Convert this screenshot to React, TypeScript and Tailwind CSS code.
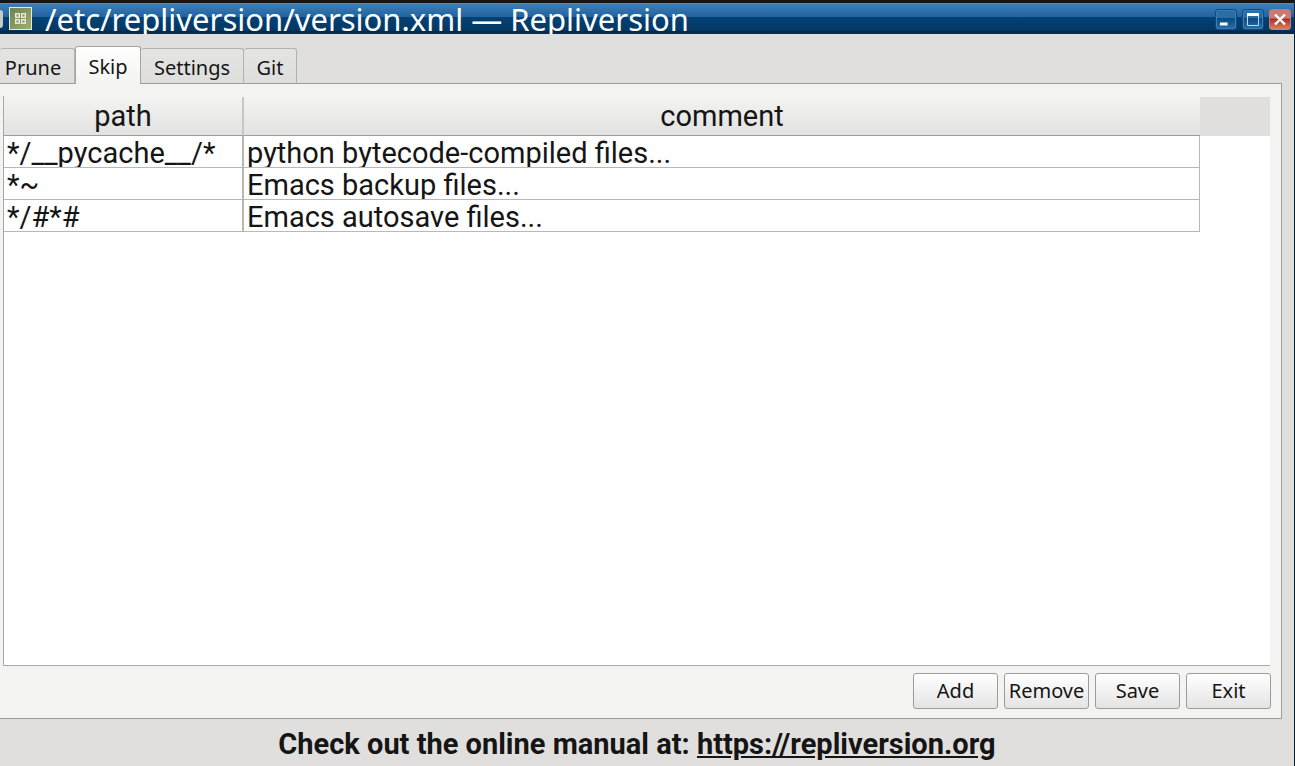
import React, { useState } from "react";

const tabs = [
  { name: "Prune", width: "w-[75px] pr-2" },
  { name: "Skip", width: "w-[66px]" },
  { name: "Settings", width: "w-[103px]" },
  { name: "Git", width: "w-[53px]" },
];

const rows = [
  { path: "*/__pycache__/*", comment: "python bytecode-compiled files..." },
  { path: "*~", comment: "Emacs backup files..." },
  { path: "*/#*#", comment: "Emacs autosave files..." },
];

const actions = ["Add", "Remove", "Save", "Exit"];

function AppIcon() {
  return (
    <svg width="23" height="23" viewBox="0 0 23 23" className="shrink-0">
      <defs>
        <linearGradient id="leaf" x1="0" y1="0" x2="1" y2="1">
          <stop offset="0" stopColor="#6f8150" />
          <stop offset="1" stopColor="#a3ad72" />
        </linearGradient>
      </defs>
      <rect x="0.5" y="0.5" width="22" height="22" fill="url(#leaf)" stroke="#e3ecd0" />
      <g fill="#8b9865" stroke="#e6eadb" strokeWidth="1.4">
        <rect x="6.7" y="6.7" width="3.6" height="3.6" />
        <rect x="12.7" y="6.7" width="3.6" height="3.6" />
        <rect x="6.7" y="12.7" width="3.6" height="3.6" />
        <rect x="12.7" y="12.7" width="3.6" height="3.6" />
      </g>
    </svg>
  );
}

function TitleBar() {
  const control =
    "h-[21px] w-[22px] rounded-[3px] border border-[#0d4a80] bg-linear-to-b from-[#2a6ea8] from-40% via-[#0b4a80] via-45% to-[#2a6fa6] shadow-[inset_0_0_0_1px_#3a7db3]";
  return (
    <header className="flex h-[34px] shrink-0 items-center overflow-hidden border-t-3 border-[#151515] bg-[linear-gradient(#3c80b8,#2263a0_45%,#034275_46%,#033863_88%,#02294a_92%,#033055)] shadow-[inset_0_1px_0_#4a8fc4]">
      <span className="mr-[6px] h-[18px] w-[3px] shrink-0 rounded-r-sm bg-[#c9cac8]" />
      <AppIcon />
      <h1 className="ml-[13px] flex-1 font-['Noto_Sans',sans-serif] text-[31px] leading-[34px] whitespace-nowrap text-white">
        /etc/repliversion/version.xml — Repliversion
      </h1>
      <div className="mt-px mr-[3px] flex gap-[5px]">
        <button type="button" aria-label="Minimize" className={control}>
          <svg viewBox="0 0 20 19" className="block">
            <rect x="4" y="12" width="8" height="4" fill="#7fabd0" />
            <rect x="4" y="13" width="7" height="2" fill="#fff" />
          </svg>
        </button>
        <button type="button" aria-label="Maximize" className={control}>
          <svg viewBox="0 0 20 19" className="block">
            <path d="M4.5 5V15.5H15.5V5" fill="none" stroke="#c5d8e8" />
            <rect x="4" y="3" width="12" height="3" fill="#fff" />
          </svg>
        </button>
        <button
          type="button"
          aria-label="Close"
          className="h-[21px] w-[22px] rounded-[3px] border border-[#d0786c] bg-linear-to-b from-[#c67c76] from-40% via-[#a9352a] via-50% to-[#dc7d69]"
        >
          <svg viewBox="0 0 20 19" className="block">
            <path d="M5 4.5L15 14.5M15 4.5L5 14.5" stroke="#fff" strokeWidth="2.4" />
          </svg>
        </button>
      </div>
    </header>
  );
}

export default function App() {
  const [active, setActive] = useState("Skip");
  return (
    <div className="flex min-h-screen flex-col border-r border-[#03223c] bg-[#e0dfdd] text-[#151515]">
      <TitleBar />
      <main className="flex flex-1 flex-col pt-[12px] pr-[12px]">
        <div role="tablist" className="z-10 -mb-px flex items-end font-['Noto_Sans',sans-serif] text-[20px]">
          {tabs.map((tab) => (
            <button
              key={tab.name}
              type="button"
              role="tab"
              aria-selected={active === tab.name}
              onClick={() => setActive(tab.name)}
              className={`${tab.width} rounded-t-[3px] border-t border-r ${
                active === tab.name
                  ? "h-[38px] border-l border-[#a5a5a4] bg-linear-to-b from-white to-[#f3f3f1] pt-[3px]"
                  : "h-[36px] border-b border-[#b2b2b1] border-b-[#9c9c9b] bg-linear-to-b from-[#e4e4e2] to-[#dededc] pt-[3px]"
              }`}
            >
              {tab.name}
            </button>
          ))}
        </div>
        <section className="flex flex-1 flex-col border-y border-r border-[#9c9c9b] bg-[#f3f3f1] pt-[12px] pr-[10px] pb-[9px]">
          <div className="mr-px ml-[3px] flex-1 border-b border-l border-[#a8a8a7] bg-white font-[Roboto,sans-serif] text-[29px]">
            <div className="border-t border-[#f3f3f1] bg-[#e0dfdd] pr-[70px]">
              <table className="w-full table-fixed border-separate border-spacing-0 text-left">
                <thead>
                  <tr className="h-[39px] bg-linear-to-b from-[#f3f3f1] to-[#e2e2e1]">
                    <th className="w-[240px] border-r-2 border-b border-r-[#c6c6c5] border-b-[#9c9c9b] p-0 text-center leading-[38px] font-normal">
                      path
                    </th>
                    <th className="border-b border-[#9c9c9b] p-0 text-center leading-[38px] font-normal">
                      comment
                    </th>
                  </tr>
                </thead>
              </table>
            </div>
            <div className="pr-[70px]">
              <table aria-label="Skipped paths" className="w-full table-fixed border-separate border-spacing-0">
                <tbody>
                  {rows.map((row) => (
                    <tr key={row.path} className="h-[32px]">
                      <td className="w-[240px] border-r-2 border-b border-[#b8b8b7] p-0 pl-[3px]">
                        <div className="h-[31px] overflow-hidden leading-[35px]">{row.path}</div>
                      </td>
                      <td className="border-r border-b border-[#b8b8b7] p-0 pl-[3px]">
                        <div className="h-[31px] overflow-hidden leading-[35px]">{row.comment}</div>
                      </td>
                    </tr>
                  ))}
                </tbody>
              </table>
            </div>
          </div>
          <div className="mt-[7px] flex justify-end gap-[6px] font-['Noto_Sans',sans-serif] text-[20px]">
            {actions.map((action) => (
              <button
                key={action}
                type="button"
                className="h-[36px] w-[85px] rounded-[3px] border border-[#9c9c9b] bg-linear-to-b from-white to-[#e4e4e4]"
              >
                {action}
              </button>
            ))}
          </div>
        </section>
      </main>
      <footer className="h-[47px] pr-[20px] text-center font-[Roboto,sans-serif] text-[29px] leading-[51px] font-bold">
        Check out the online manual at:{" "}
        <a href="https://repliversion.org" className="underline">
          https://repliversion.org
        </a>
      </footer>
    </div>
  );
}
